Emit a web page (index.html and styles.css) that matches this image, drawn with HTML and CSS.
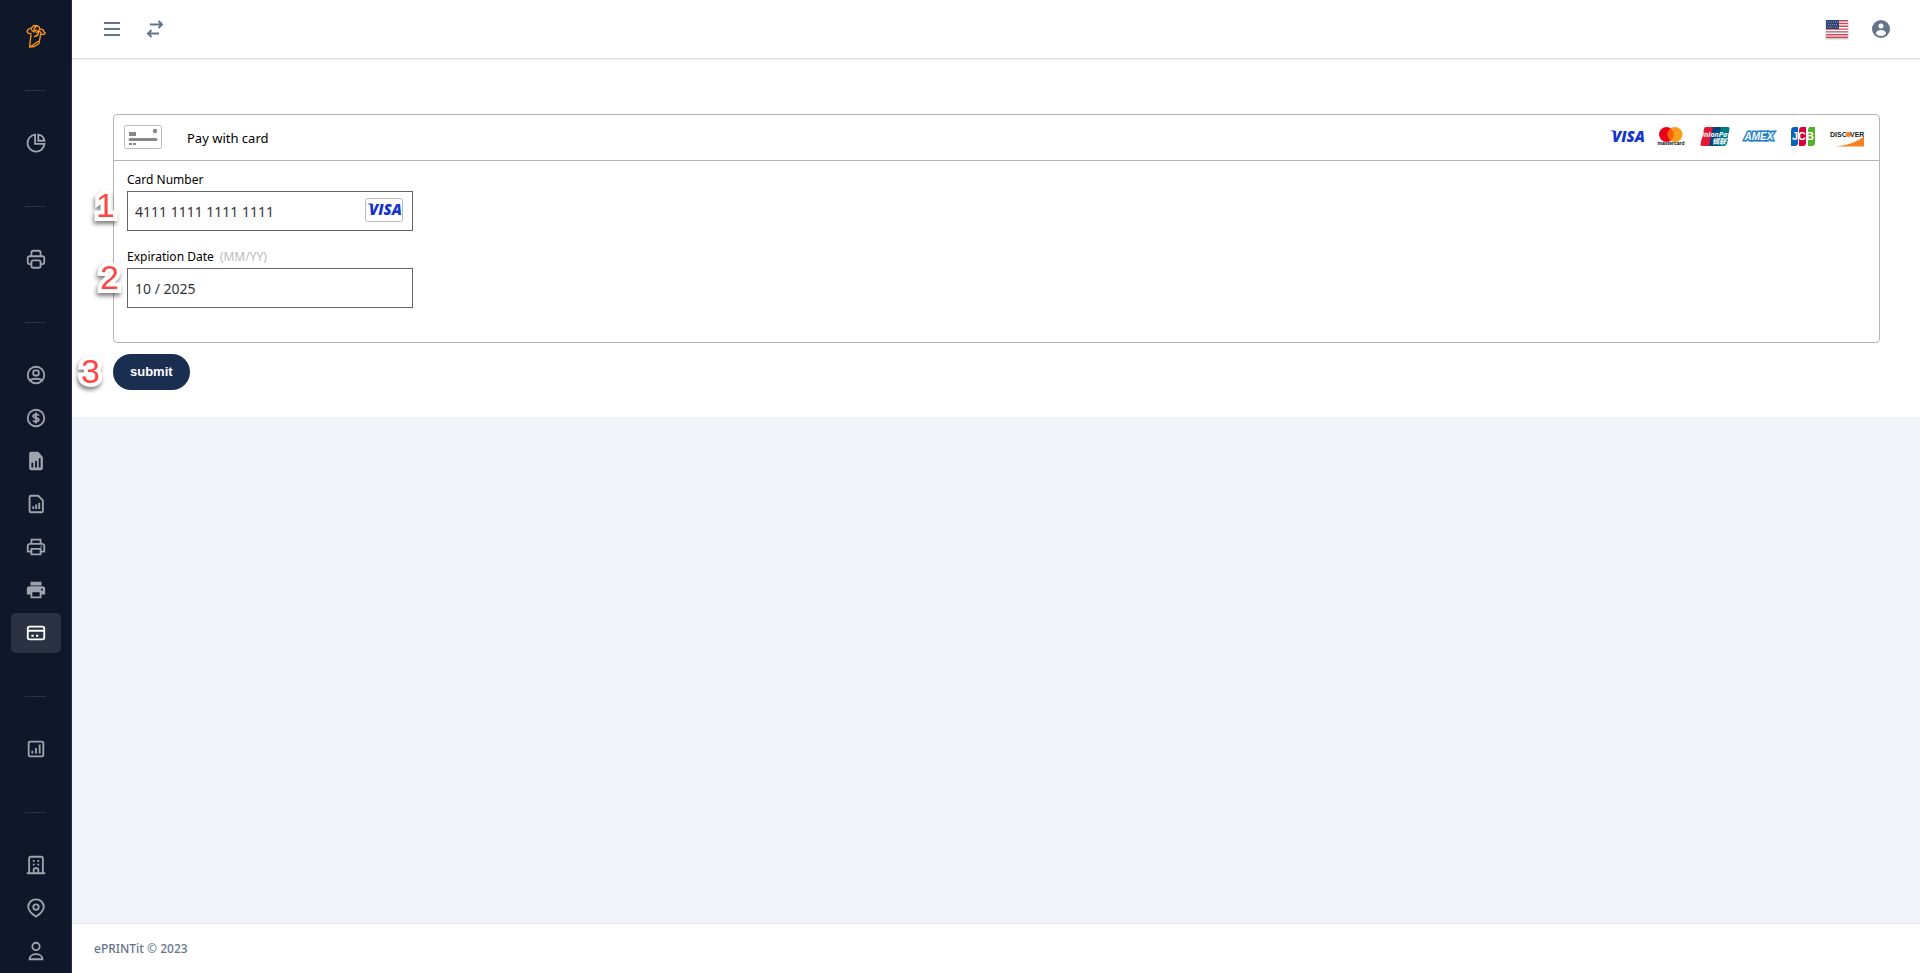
FILE: index.html
```html
<!DOCTYPE html>
<html lang="en">
<head>
  <meta charset="UTF-8">
  <meta name="viewport" content="width=device-width, initial-scale=1.0">
  <title>ePRINTit</title>
  <link rel="stylesheet" href="styles.css">
</head>
<body>
  <nav class="sidebar">
    <a class="logo" href="#" aria-label="ePRINTit">
      <svg width="20" height="24" viewBox="0 0 20 24" fill="none" stroke="#f7931e" stroke-width="1.4" stroke-linejoin="round" stroke-linecap="round">
        <path d="M5 9.500C2 10 .500 8 1.500 6.500C2 4.500 4.500 4 5.500 4.500C6.500 2 9 1 11.500 2C13 2.500 14 4 13.500 5.500C16 4.500 18 6 17.500 7.500L19.200 9C18.500 10.500 16 10.500 14.500 10"/>
        <path d="M5 11L3.500 23L8.500 22.500L13 19.500L14.500 11M4 23L12 17.500"/>
        <path d="M11 2C8.500 3 8 5 8 7.500M5.500 6L8 8L10.500 6M8.500 12.500C11 12 13 10 12.500 7M10.500 8.500L12.500 6.500L15 8.500"/>
      </svg>
    </a>

    <hr>
    <a class="item" href="#" aria-label="Dashboard">
      <svg viewBox="0 0 24 24"><path d="M11 2.800A9.300 9.300 0 1 0 21.300 13H11Z"/><path d="M14.500 2.800V9.500H21.200A8 8 0 0 0 14.500 2.800Z"/></svg>
    </a>

    <hr>
    <a class="item" href="#" aria-label="Print">
      <svg viewBox="0 0 24 24"><path d="M7 8V5a2 2 0 0 1 2-2h6a2 2 0 0 1 2 2v3M6.500 17.500H5a2 2 0 0 1-2-2V11a2 2 0 0 1 2-2h14a2 2 0 0 1 2 2v4.500a2 2 0 0 1-2 2h-1.500"/><rect x="7" y="13.500" width="10" height="8" rx="2"/></svg>
    </a>

    <hr>
    <a class="item" href="#" aria-label="Account">
      <svg viewBox="0 0 24 24"><circle cx="12" cy="12" r="9"/><rect x="9" y="7" width="6" height="5.500" rx="2"/><path d="M5.500 18C7.500 15.500 16.500 15.500 18.500 18"/></svg>
    </a>
    <a class="item" href="#" aria-label="Funds">
      <svg viewBox="0 0 24 24"><circle cx="12" cy="12" r="9"/><path d="M15 9.500C14.800 8.300 13.600 8 12 8S9 8.500 9 10C9 12.800 15 11.200 15 14C15 15.500 13.600 16 12 16S9.200 15.700 9 14.500M12 6V18"/></svg>
    </a>
    <a class="item" href="#" aria-label="Report">
      <svg viewBox="0 0 24 24"><path class="solid" d="M6 2h8.500L19.500 7.500V20a2 2 0 0 1-2 2H6.500a2 2 0 0 1-2-2V4a2 2 0 0 1 2-2Z"/><path class="cut" d="M8 19v-5M12 19v-7M16 19V9"/></svg>
    </a>
    <a class="item" href="#" aria-label="Document report">
      <svg viewBox="0 0 24 24"><path d="M6.500 3h8L19.500 8V19.500a1.500 1.500 0 0 1-1.500 1.500H6.500a1.500 1.500 0 0 1-1.500-1.500V4.500A1.500 1.500 0 0 1 6.500 3Z"/><path d="M9 17.500v-3M12.200 17.500v-5M15.500 17.500v-7"/></svg>
    </a>
    <a class="item" href="#" aria-label="Printers">
      <svg viewBox="0 0 24 24"><path d="M7 8V4h10v4M7 17H3V11a2.500 2.500 0 0 1 2.500-2.500h13A2.500 2.500 0 0 1 21 11v6h-4"/><path d="M7 14h10v6H7ZM17 11.500h1.500"/></svg>
    </a>
    <a class="item" href="#" aria-label="Print queue">
      <svg viewBox="0 0 24 24"><path class="solid" d="M6 3h12v4H6ZM5 8h14a3 3 0 0 1 3 3v6h-4v4H6v-4H2v-6a3 3 0 0 1 3-3Z"/><path class="hole" d="M8 14.500h8V19H8ZM17.500 10.500h2v2h-2Z"/></svg>
    </a>
    <a class="item active" href="#" aria-label="Payment">
      <svg viewBox="0 0 24 24"><rect x="3" y="5" width="18" height="14" rx="2"/><path d="M3 9.500h18M7 15h2.500M12 15h2.500"/></svg>
    </a>

    <hr>
    <a class="item" href="#" aria-label="Statistics">
      <svg viewBox="0 0 24 24"><rect x="4" y="4" width="16" height="16" rx="1.500"/><path d="M8 17v-3M12 17v-6M16 17V7"/></svg>
    </a>

    <hr>
    <a class="item" href="#" aria-label="Company">
      <svg viewBox="0 0 24 24"><path d="M2 21h20M4.500 21V5a2 2 0 0 1 2-2h11a2 2 0 0 1 2 2v16M9.500 21v-4a1.500 1.500 0 0 1 1.500-1.500h2a1.500 1.500 0 0 1 1.500 1.500v4M8.500 7.500h2M13.500 7.500h2M8.500 11.500h2M13.500 11.500h2"/></svg>
    </a>
    <a class="item" href="#" aria-label="Locations">
      <svg viewBox="0 0 24 24"><path d="M12 21.500C8.500 19 3.500 15.500 3.500 10.800a8.500 8.300 0 0 1 17 0C20.500 15.500 15.500 19 12 21.500Z"/><circle cx="12" cy="11" r="3"/></svg>
    </a>
    <a class="item" href="#" aria-label="Users">
      <svg viewBox="0 0 24 24"><circle cx="12" cy="7" r="4"/><path d="M5 21C5 13.500 19 13.500 19 21Z"/></svg>
    </a>
  </nav>

  <div class="page">
    <header class="topbar">
      <button type="button" class="icon-btn" aria-label="Menu">
        <svg width="19" height="16" viewBox="0 0 19 16"><path d="M1 2h16M1 8h16M1 14h16"/></svg>
      </button>
      <button type="button" class="icon-btn" aria-label="Switch">
        <svg width="18" height="20" viewBox="0 0 18 20"><path d="M4 5.500h12M12.500 2l3.500 3.500-3.500 3.500M13 14.500H2M5.500 11L2 14.500 5.500 18"/></svg>
      </button>
      <span class="spacer"></span>
      <button type="button" class="icon-btn" aria-label="Language">
        <svg class="flag" width="22" height="18" viewBox="0 0 22 18">
          <path class="white" d="M0 0h22v18H0z"/>
          <path class="stripes" d="M0 .700h22M0 3.500h22M0 6.300h22M0 9.100h22M0 11.900h22M0 14.700h22M0 17.300h22"/>
          <path class="canton" d="M0 0h13v9H0z"/>
          <path class="stars" d="M1 2h11M2 4.500h10M1 7h11"/>
        </svg>
      </button>
      <button type="button" class="icon-btn" aria-label="Profile">
        <svg width="18" height="18" viewBox="0 0 18 18"><circle class="disc" cx="9" cy="9" r="9"/><circle class="face" cx="9" cy="6" r="2.500"/><ellipse class="face" cx="9" cy="13" rx="5" ry="3"/></svg>
      </button>
    </header>

    <main>
      <form class="payment">
        <div class="card">
          <div class="card-head">
            <svg class="card-icon" width="38" height="24" viewBox="0 0 38 24">
              <rect x=".500" y=".500" width="37" height="23" rx="2"/>
              <path d="M5 7h7v4H5zM6 13h26a1.500 1.500 0 0 1 0 3H6a1.500 1.500 0 0 1 0-3zM5 18h3v2H5zM9 18h3v2H9z"/>
              <circle cx="31" cy="6" r="2.200"/>
            </svg>
            <h1>Pay with card</h1>
            <div class="brands">
              <svg width="38" height="24" viewBox="0 0 38 24"><text class="visa" x="3" y="17">VISA</text><path fill="#1434cb" d="M1 5.500h5l1 4q-2-3-6-4z"/></svg>
              <svg width="38" height="24" viewBox="0 0 38 24"><circle cx="13.500" cy="9.500" r="7.500" fill="#eb001b"/><circle cx="22" cy="9.500" r="7.500" fill="#f79e1b"/><path fill="#ff5f00" d="M17.800 3.500a7.500 7.500 0 0 1 0 12a7.500 7.500 0 0 1 0-12z"/><text class="mc" x="18" y="20">mastercard</text></svg>
              <svg width="38" height="24" viewBox="0 0 38 24"><path fill="#e21836" d="M9 2h9l-4 19H5q-2 0-1.500-2L7 4q0-2 2-2z"/><path fill="#00447c" d="M16 2h11l-4 19H12z"/><path fill="#007b84" d="M24 2h7q2 0 1.500 2L30 19q-1 2-3 2h-7z"/><text class="up" x="18" y="12">UnionPay</text><text class="up-cn" x="22" y="19">银联</text></svg>
              <svg width="38" height="24" viewBox="0 0 38 24"><text class="amex" x="18" y="15">AMEX</text></svg>
              <svg width="38" height="24" viewBox="0 0 38 24"><path fill="#0b63b7" d="M9 2h4v16q0 3-3 3H6V6q0-4 3-4z"/><path fill="#d8003c" d="M17 2h4v16q0 3-3 3h-4V6q0-4 3-4z"/><path fill="#54b230" d="M25 2h5v16q0 3-3 3h-4V6q0-4 2-4z"/><text class="jcb" x="18" y="15">JCB</text></svg>
              <svg width="38" height="24" viewBox="0 0 38 24"><text class="disc-name" x="1" y="12">DISC</text><circle cx="19.500" cy="9.500" r="2.500" fill="#f58220"/><text class="disc-name" x="21" y="12">VER</text><path fill="#f58220" d="M7 21.500Q24 20 35 11.500v10z"/></svg>
            </div>
          </div>

          <div class="card-body">
            <div class="field">
              <span class="step">1</span>
              <label for="card-number">Card Number</label>
              <input type="text" id="card-number" value="4111 1111 1111 1111">
              <svg class="card-type" width="38" height="24" viewBox="0 0 38 24"><rect x=".500" y=".500" width="37" height="23" rx="2" fill="#fff" stroke="#bbb"/><text class="visa" x="4" y="17">VISA</text><path fill="#1434cb" d="M2 5.500h5l1 4q-2-3-6-4z"/></svg>
            </div>
            <div class="field">
              <span class="step step-2">2</span>
              <label for="expiration">Expiration Date <span class="hint">(MM/YY)</span></label>
              <input type="text" id="expiration" value="10 / 2025">
            </div>
          </div>
        </div>
        <div class="actions">
          <span class="step step-3">3</span>
          <button type="submit" class="submit">submit</button>
        </div>
      </form>
    </main>

    <footer>ePRINTit © 2023</footer>
  </div>
</body>
</html>
```

FILE: styles.css
```css
* {
  box-sizing: border-box;
}
body {
  margin: 0;
  display: flex;
  height: 100vh;
  overflow: hidden;
  font-family: "Noto Sans", sans-serif;
  background: #f0f4f8;
}

/* sidebar */
.sidebar {
  width: 72px;
  flex-shrink: 0;
  background: #0f172a;
  border-right: 1px solid #272e3f;
  display: flex;
  flex-direction: column;
  align-items: center;
  overflow: hidden;
}
.sidebar > * {
  flex-shrink: 0;
}
.logo {
  height: 50px;
  padding-top: 24px;
}
.logo svg {
  display: block;
}
.sidebar hr {
  width: 21px;
  height: 1px;
  border: none;
  background: #2b3244;
  margin: 40px 0 32px;
}
.item {
  width: 50px;
  height: 40px;
  margin-bottom: 3px;
  border-radius: 5px;
  display: flex;
  align-items: center;
  justify-content: center;
  color: #9fa3ad;
}
.item.active {
  background: #2b3244;
  color: #fff;
}
.item svg {
  width: 22px;
  height: 22px;
  fill: none;
  stroke: currentColor;
  stroke-width: 2;
}
.item .solid {
  fill: currentColor;
  stroke: none;
}
.item .cut {
  stroke: #0f172a;
}
.item .hole {
  fill: #0f172a;
  stroke: none;
}

/* top bar */
.page {
  flex: 1;
  min-width: 0;
  display: flex;
  flex-direction: column;
}
.topbar {
  height: 58px;
  flex-shrink: 0;
  display: flex;
  align-items: center;
  gap: 24px;
  padding: 0 30px 1px 31px;
  background: #fff;
  box-shadow: 0 1px 2px rgba(0,0,0,0.2);
  z-index: 1;
}
.icon-btn {
  display: flex;
  background: none;
  border: none;
  padding: 0;
  cursor: pointer;
}
.icon-btn svg {
  fill: none;
  stroke: #64748b;
  stroke-width: 2;
}
.icon-btn .disc {
  fill: #64748b;
  stroke: none;
}
.icon-btn .face {
  fill: #fff;
  stroke: none;
}
.icon-btn .flag {
  stroke: none;
  box-shadow: 0 1px 2px rgba(0,0,0,0.3);
}
.flag .white {
  fill: #fff;
}
.flag .stripes {
  stroke: #c94a58;
  stroke-width: 1.400;
}
.flag .canton {
  fill: #2f4372;
}
.flag .stars {
  stroke: #8d9abb;
  stroke-width: 1;
  stroke-dasharray: 1 1;
}
.spacer {
  flex: 1;
}

/* payment form */
main {
  flex: 1;
}
.payment {
  background: #fff;
  padding: 56px 40px 27px 41px;
}
.card {
  border: 1px solid #b5b5b5;
  border-radius: 4px;
}
.card-head {
  height: 46px;
  display: flex;
  align-items: center;
  padding: 0 12px 2px 10px;
  border-bottom: 1px solid #b5b5b5;
}
.card-icon rect {
  fill: #fff;
  stroke: #bbb;
}
.card-icon path, .card-icon circle {
  fill: #888;
}
.card-head h1 {
  flex: 1;
  margin: 0 0 0 25px;
  padding-top: 2px;
  font-size: 13px;
  font-weight: normal;
}
.brands {
  display: flex;
  gap: 6px;
}
.card-body {
  padding: 9px 13px 34px;
}
.field {
  position: relative;
  width: 286px;
}
.field + .field {
  margin-top: 16px;
}
label {
  display: block;
  font-size: 12px;
  line-height: 20px;
  padding-bottom: 1px;
}
.hint {
  color: #bbb;
  margin-left: 3px;
}
input {
  display: block;
  width: 100%;
  height: 40px;
  padding: 1px 7px 0;
  border: 1px solid #666;
  font-family: inherit;
  font-size: 14px;
  color: #333;
}
.card-type {
  position: absolute;
  right: 10px;
  bottom: 9px;
}
.actions {
  position: relative;
  margin-top: 11px;
}
.submit {
  display: block;
  height: 36px;
  padding: 0 17px 1px;
  border: none;
  border-radius: 18px;
  background: #1a2e52;
  color: #fff;
  font: bold 13px "Liberation Sans", sans-serif;
  cursor: pointer;
}

/* numbered callouts */
.step {
  position: absolute;
  top: 17px;
  left: -31px;
  font: 34px/36px "Liberation Sans", sans-serif;
  color: #ff4444;
  -webkit-text-stroke: 8px #fff;
  paint-order: stroke fill;
  stroke-linejoin: round;
  filter: drop-shadow(-1px 3px 2px rgba(0,0,0,0.5));
}
.step-2 {
  top: 12px;
  left: -27px;
}
.step-3 {
  top: -1px;
  left: -32px;
}

/* brand marks */
.visa {
  font: italic 800 15px "Open Sans", sans-serif;
  fill: #1434cb;
}
.mc {
  font: bold 5px "Liberation Sans", sans-serif;
  text-anchor: middle;
}
.up {
  font: italic bold 7px "Open Sans", sans-serif;
  fill: #fff;
  text-anchor: middle;
}
.up-cn {
  font: italic bold 7px "Noto Sans CJK SC", sans-serif;
  fill: #fff;
  text-anchor: middle;
}
.amex {
  font: italic bold 10px "Liberation Sans", sans-serif;
  fill: #fff;
  stroke: #1f80c8;
  stroke-width: 3;
  paint-order: stroke;
  text-anchor: middle;
}
.jcb {
  font: bold 11px "Liberation Sans", sans-serif;
  fill: #fff;
  text-anchor: middle;
}
.disc-name {
  font: bold 7px "Liberation Sans", sans-serif;
  fill: #222;
}

footer {
  height: 50px;
  flex-shrink: 0;
  display: flex;
  align-items: center;
  padding: 0 22px;
  background: #fff;
  border-top: 1px solid #e2e8f0;
  font-size: 12px;
  font-weight: 500;
  color: #64748b;
}
```
